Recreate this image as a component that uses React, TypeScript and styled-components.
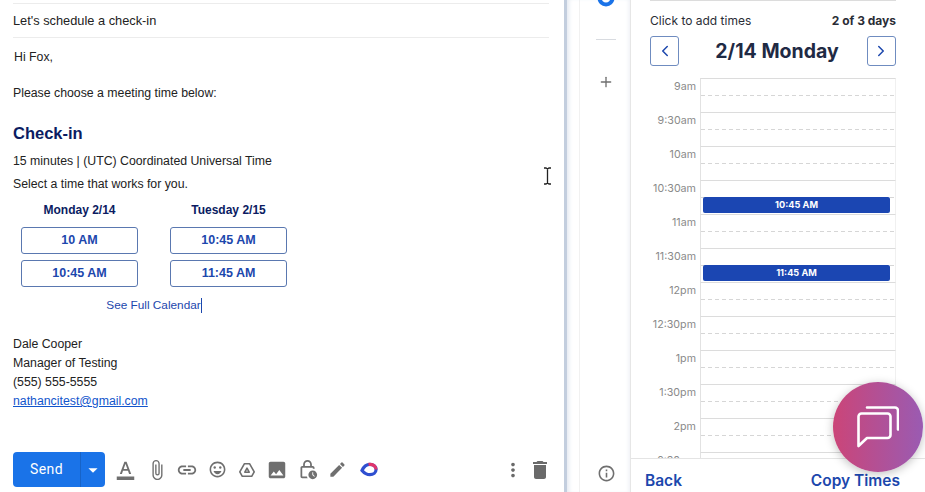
import React from "react";
import styled, { createGlobalStyle } from "styled-components";
import {
  MdArrowDropDown,
  MdAttachFile,
  MdCreate,
  MdDelete,
  MdFormatColorText,
  MdImage,
  MdInfoOutline,
  MdLink,
  MdMoreVert,
  MdOutlineEmojiEmotions,
  MdOutlineLockClock,
} from "react-icons/md";
import { LuChevronLeft, LuChevronRight, LuPlus } from "react-icons/lu";

const GlobalStyle = createGlobalStyle`
  html, body {
    margin: 0;
    padding: 0;
    background: #fff;
  }
  * {
    box-sizing: border-box;
  }
`;

const days = [
  { title: "Monday 2/14", times: ["10 AM", "10:45 AM"] },
  { title: "Tuesday 2/15", times: ["10:45 AM", "11:45 AM"] },
];

const slots: { label: string; event?: string }[] = [
  { label: "9am" },
  { label: "9:30am" },
  { label: "10am" },
  { label: "10:30am", event: "10:45 AM" },
  { label: "11am" },
  { label: "11:30am", event: "11:45 AM" },
  { label: "12pm" },
  { label: "12:30pm" },
  { label: "1pm" },
  { label: "1:30pm" },
  { label: "2pm" },
  { label: "2:30pm" },
];

export default function App() {
  return (
    <Page>
      <GlobalStyle />
      <Compose>
        <Subject>Let's schedule a check-in</Subject>
        <Body>
          <Greeting>Hi Fox,</Greeting>
          <Intro>Please choose a meeting time below:</Intro>
          <EventTitle>Check-in</EventTitle>
          <Duration>15 minutes | (UTC) Coordinated Universal Time</Duration>
          <Hint>Select a time that works for you.</Hint>
          <DayGrid>
            {days.map((day) => (
              <DayColumn key={day.title}>
                <DayTitle>{day.title}</DayTitle>
                {day.times.map((time) => (
                  <TimeButton key={time}>{time}</TimeButton>
                ))}
              </DayColumn>
            ))}
          </DayGrid>
          <CalendarLink>
            See Full Calendar
            <Caret />
          </CalendarLink>
          <Signature>
            <div>Dale Cooper</div>
            <div>Manager of Testing</div>
            <div>(555) 555-5555</div>
            <MailLink>nathancitest@gmail.com</MailLink>
          </Signature>
        </Body>
        <Toolbar>
          <SendGroup>
            <SendLabel>Send</SendLabel>
            <SendArrow>
              <MdArrowDropDown size={22} />
            </SendArrow>
          </SendGroup>
          <ToolIcons>
            <ToolIcon>
              <MdFormatColorText size={21} />
            </ToolIcon>
            <ToolIcon>
              <MdAttachFile size={22} />
            </ToolIcon>
            <ToolIcon>
              <MdLink size={22} />
            </ToolIcon>
            <ToolIcon>
              <MdOutlineEmojiEmotions size={19} />
            </ToolIcon>
            <ToolIcon>
              <svg width="18" height="18" viewBox="0 0 20 20" fill="none" stroke="#6f6f6f" strokeWidth="1.800" strokeLinejoin="round">
                <path d="M7.200 3h5.600l5.200 9-2.800 5H4.800L2 12z" />
                <path d="M10 8l2.400 4.500H7.600z" />
              </svg>
            </ToolIcon>
            <ToolIcon>
              <MdImage size={22} />
            </ToolIcon>
            <ToolIcon>
              <MdOutlineLockClock size={21} />
            </ToolIcon>
            <ToolIcon>
              <MdCreate size={19} />
            </ToolIcon>
            <ToolIcon>
              <svg width="19" height="15" viewBox="0 0 20 16" fill="none">
                <path d="M2 9C4 4.500 7.500 2.500 10.500 2.500c3.500 0 6.500 2.300 6.500 5.500 0 3.200-3 5.500-6.500 5.500-3 0-6-1.500-8.500-4.500z" stroke="#2f4fd0" strokeWidth="3.400" />
                <path d="M9 2.600c4-.8 8 1.800 8 5.400" stroke="#e0356b" strokeWidth="3.400" />
              </svg>
            </ToolIcon>
          </ToolIcons>
          <ToolEnd>
            <MdMoreVert size={22} />
            <MdDelete size={24} />
          </ToolEnd>
        </Toolbar>
        <TextCursor width="9" height="18" viewBox="0 0 9 18" fill="none" stroke="#222" strokeWidth="1.300">
          <path d="M1 1h2l1.500 1L6 1h2M4.500 2v14M1 17h2l1.500-1L6 17h2" />
        </TextCursor>
      </Compose>

      <Rail>
        <RailAvatar width="18" height="7" viewBox="0 0 18 7" fill="none">
          <circle cx="9" cy="-2" r="6.500" stroke="#1a73e8" strokeWidth="4" />
        </RailAvatar>
        <RailRule />
        <RailPlus>
          <LuPlus size={16} />
        </RailPlus>
        <RailInfo>
          <MdInfoOutline size={19} />
        </RailInfo>
      </Rail>

      <Side>
        <SideInner>
          <TopRule />
          <StatusRow>
            <StatusText>Click to add times</StatusText>
            <StatusCount>2 of 3 days</StatusCount>
          </StatusRow>
          <DateRow>
            <NavButton>
              <LuChevronLeft size={18} />
            </NavButton>
            <DateTitle>2/14 Monday</DateTitle>
            <NavButton>
              <LuChevronRight size={18} />
            </NavButton>
          </DateRow>
          <Schedule>
            {slots.map((slot) => (
              <SlotRow key={slot.label}>
                <SlotLabel>{slot.label}</SlotLabel>
                <SlotCell>
                  {slot.event && <EventBar>{slot.event}</EventBar>}
                </SlotCell>
              </SlotRow>
            ))}
          </Schedule>
        </SideInner>
        <SideFooter>
          <FooterAction>Back</FooterAction>
          <FooterAction>Copy Times</FooterAction>
        </SideFooter>
        <ChatBubble>
          <svg width="42" height="42" viewBox="0 0 42 42" fill="none" stroke="#fff" strokeWidth="2.600" strokeLinejoin="round" strokeLinecap="round">
            <path d="M10 1.500h28a3 3 0 0 1 3 3v19" />
            <path d="M4.500 7.500h26a3 3 0 0 1 3 3v18.500a3 3 0 0 1-3 3H10l-8.500 8V10.500a3 3 0 0 1 3-3z" />
          </svg>
        </ChatBubble>
      </Side>
    </Page>
  );
}

const Page = styled.div`
  position: relative;
  display: flex;
  width: 925px;
  height: 492px;
  overflow: hidden;
  background: #fff;
  font-family: "Liberation Sans", Arial, sans-serif;
`;

const Compose = styled.section`
  position: relative;
  display: flex;
  flex-direction: column;
  width: 564px;
  flex: none;
  padding: 3px 15px 5px 13px;
`;

const Subject = styled.div`
  height: 35px;
  border-top: 1px solid #ececec;
  border-bottom: 1px solid #ececec;
  font-size: 12.800px;
  line-height: 33px;
  color: #222;
`;

const Body = styled.div`
  flex: 1;
  font-size: 12.300px;
  line-height: 19px;
  color: #222;
`;

const Greeting = styled.div`
  margin: 10px 0 0 1px;
`;

const Intro = styled.div`
  margin-top: 17px;
`;

const EventTitle = styled.h2`
  margin: 18px 0 0;
  font-size: 16.500px;
  line-height: 24px;
  font-weight: 700;
  color: #0b1c62;
`;

const Duration = styled.div`
  margin-top: 7px;
`;

const Hint = styled.div`
  margin-top: 4px;
`;

const DayGrid = styled.div`
  display: flex;
  gap: 32px;
  margin: 7px 0 0 8px;
`;

const DayColumn = styled.div`
  display: flex;
  flex-direction: column;
  gap: 6px;
  width: 117px;
`;

const DayTitle = styled.div`
  height: 20px;
  font-size: 12px;
  line-height: 18px;
  font-weight: 700;
  text-align: center;
  white-space: nowrap;
  color: #0b1c62;
`;

const TimeButton = styled.div`
  height: 27px;
  border: 1px solid #5a78b0;
  border-radius: 3px;
  font-size: 12.500px;
  line-height: 25px;
  font-weight: 700;
  text-align: center;
  color: #1c47ad;
`;

const CalendarLink = styled.div`
  display: flex;
  justify-content: center;
  width: 266px;
  margin: 9px 0 0 8px;
  font-size: 11.800px;
  line-height: 18px;
  color: #1c47ad;
`;

const Caret = styled.span`
  width: 1px;
  height: 15px;
  margin-top: 2px;
  background: #1c47ad;
`;

const Signature = styled.div`
  margin-top: 21px;
`;

const MailLink = styled.a`
  color: #1155cc;
  text-decoration: underline;
`;

const Toolbar = styled.div`
  display: flex;
  align-items: center;
  height: 35px;
`;

const SendGroup = styled.div`
  display: flex;
  width: 92px;
  height: 35px;
  border-radius: 4px;
  overflow: hidden;
  background: #1a73e8;
  color: #fff;
`;

const SendLabel = styled.div`
  width: 68px;
  border-right: 1px solid #1763c7;
  font-family: Roboto, sans-serif;
  font-size: 14px;
  font-weight: 400;
  letter-spacing: 0.4px;
  line-height: 34px;
  text-align: center;
`;

const SendArrow = styled.div`
  display: flex;
  flex: 1;
  align-items: center;
  justify-content: center;
`;

const ToolIcons = styled.div`
  display: flex;
  margin-left: 5px;
`;

const ToolIcon = styled.div`
  display: flex;
  align-items: center;
  justify-content: center;
  width: 30px;
  height: 30px;
  color: #6f6f6f;
  &:first-child {
    margin-right: 2px;
  }
  &:last-child {
    margin-left: 2px;
  }
`;

const ToolEnd = styled.div`
  display: flex;
  align-items: center;
  gap: 4px;
  margin-left: auto;
  margin-right: -3px;
  color: #6a6a6a;
`;

const TextCursor = styled.svg`
  position: absolute;
  left: 543px;
  top: 167px;
`;

const Rail = styled.aside`
  display: flex;
  flex-direction: column;
  align-items: center;
  width: 67px;
  flex: none;
  padding-left: 15px;
  border-left: 3px solid #c3cede;
  border-right: 1px solid #e6e6e6;
  background: linear-gradient(#f1f1f1, #f1f1f1) 12px 0 / 1px 100% no-repeat;
  box-shadow: inset 4px 0 4px -2px #e4e9f1, inset -4px 0 4px -3px #eceff4;
  color: #6f6f6f;
`;

const RailAvatar = styled.svg`
  flex: none;
`;

const RailRule = styled.div`
  width: 20px;
  height: 1px;
  margin-top: 32px;
  background: #d8dbe0;
`;

const RailPlus = styled.div`
  display: flex;
  margin-top: 34px;
`;

const RailInfo = styled.div`
  display: flex;
  margin-top: auto;
  margin-bottom: 9px;
`;

const Side = styled.section`
  position: relative;
  display: flex;
  flex: 1;
  flex-direction: column;
  min-width: 0;
`;

const SideInner = styled.div`
  flex: 1;
  min-height: 0;
  overflow: hidden;
  padding: 0 29px 0 19px;
`;

const TopRule = styled.div`
  height: 1px;
  background: #dcdcdc;
`;

const StatusRow = styled.div`
  display: flex;
  align-items: baseline;
  justify-content: space-between;
  margin-top: 12px;
  font-family: Inter, sans-serif;
  font-size: 12px;
  line-height: 15px;
  color: #2a2d36;
`;

const StatusText = styled.span`
  font-weight: 400;
`;

const StatusCount = styled.span`
  font-weight: 700;
`;

const DateRow = styled.div`
  display: flex;
  align-items: center;
  justify-content: space-between;
  margin-top: 8px;
`;

const NavButton = styled.div`
  display: flex;
  align-items: center;
  justify-content: center;
  width: 29px;
  height: 30px;
  border: 1px solid #6f8cc0;
  border-radius: 3px;
  color: #1c47ad;
`;

const DateTitle = styled.div`
  margin-left: 8px;
  font-family: Inter, sans-serif;
  font-size: 19.500px;
  font-weight: 700;
  color: #1f2a44;
`;

const Schedule = styled.div`
  margin-top: 12px;
`;

const SlotRow = styled.div`
  display: flex;
  height: 34px;
`;

const SlotLabel = styled.div`
  width: 50px;
  flex: none;
  padding: 2px 4px 0 0;
  font-family: Inter, sans-serif;
  font-size: 10.700px;
  line-height: 14px;
  text-align: right;
  color: #8a8a8a;
`;

const SlotCell = styled.div`
  position: relative;
  flex: 1;
  border-left: 1px solid #e2e2e2;
  border-right: 1px solid #f0f0f0;
  border-top: 1px solid #dcdcdc;
  background: linear-gradient(
    to right,
    #d6d6d6 0 4px,
    transparent 4px 7px
  ) 0 16px / 7px 1px repeat-x;
`;

const EventBar = styled.div`
  position: absolute;
  left: 2px;
  right: 5px;
  top: 16px;
  height: 16px;
  border-radius: 2px;
  background: #1b46b2;
  font-family: Inter, sans-serif;
  font-size: 9.200px;
  font-weight: 700;
  line-height: 16px;
  text-align: center;
  color: #fff;
`;

const SideFooter = styled.div`
  display: flex;
  align-items: flex-end;
  justify-content: space-between;
  height: 34px;
  padding: 0 25px 1px 14px;
  border-top: 1px solid #e4e4e4;
  background: #fff;
`;

const FooterAction = styled.div`
  font-family: Inter, sans-serif;
  font-size: 15.500px;
  font-weight: 600;
  line-height: 20px;
  color: #1c47ad;
`;

const ChatBubble = styled.div`
  position: absolute;
  right: 2px;
  bottom: 20px;
  display: flex;
  align-items: center;
  justify-content: center;
  width: 90px;
  height: 90px;
  border-radius: 50%;
  background: linear-gradient(to right, #cb4578, #9a5bb2);
  box-shadow: 0 2px 10px rgba(0, 0, 0, 0.25);
`;
